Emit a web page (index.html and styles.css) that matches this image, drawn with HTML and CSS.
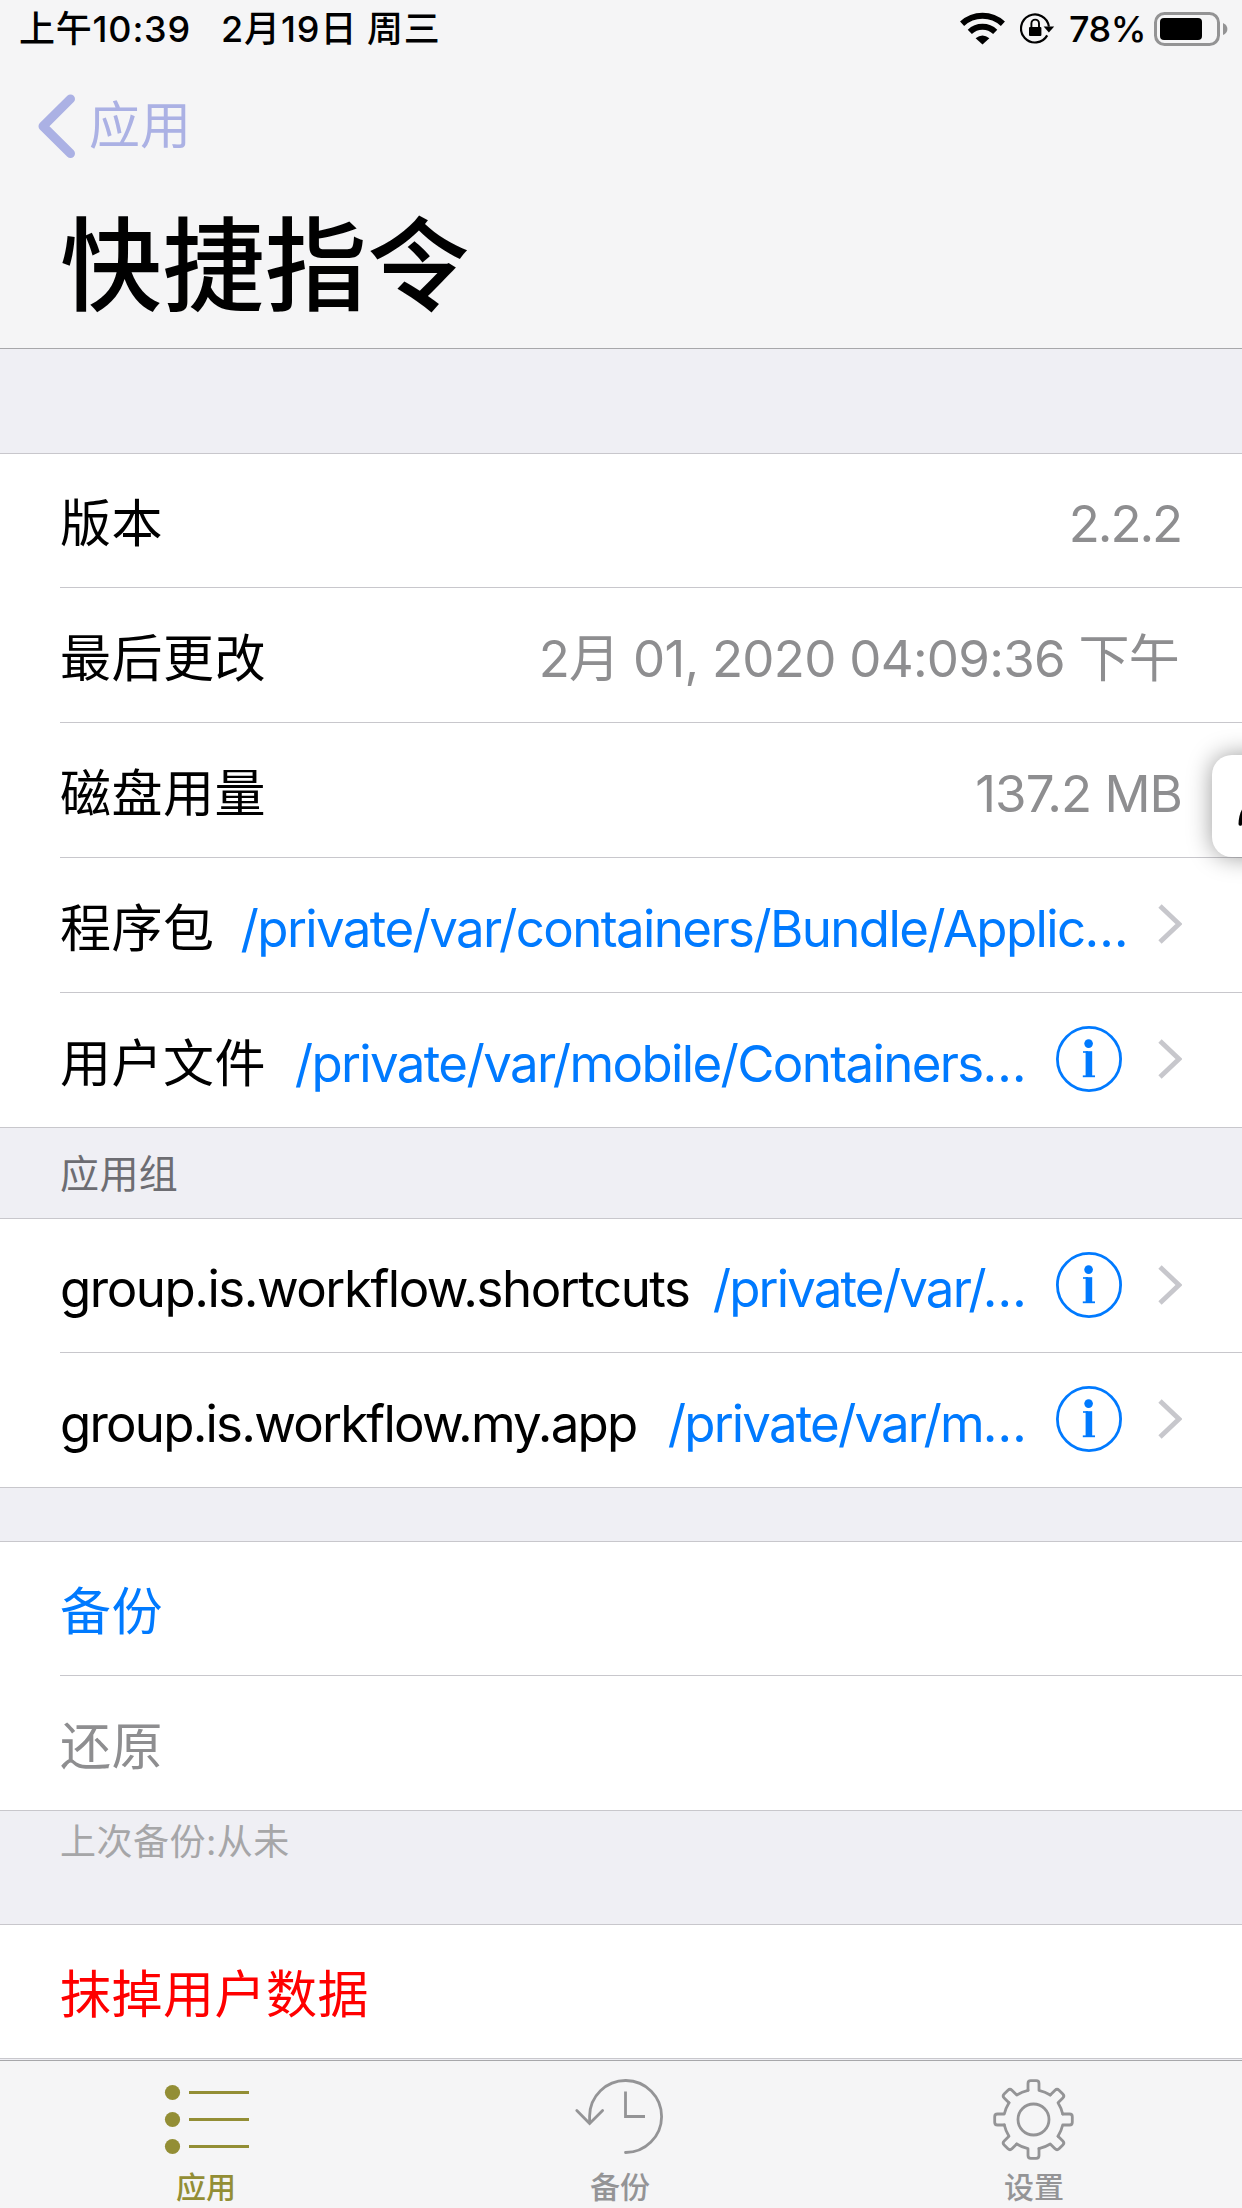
FILE: index.html
```html
<!DOCTYPE html>
<html lang="zh-CN">
<head>
<meta charset="utf-8">
<title>快捷指令</title>
<link rel="stylesheet" href="styles.css">
</head>
<body>
<svg class="defs" width="0" height="0" aria-hidden="true">
  <symbol id="icon-info" viewBox="0 0 66 66">
    <circle cx="33" cy="33" r="31.6" fill="none" stroke="currentColor" stroke-width="2.8"/>
    <circle cx="32.6" cy="17.6" r="4.3" fill="currentColor"/>
    <rect x="29.6" y="25.2" width="6.6" height="25.8" fill="currentColor"/>
    <rect x="27" y="25.2" width="5" height="1.6" fill="currentColor"/>
    <rect x="26.8" y="49.4" width="12.2" height="1.8" fill="currentColor"/>
  </symbol>
  <symbol id="icon-chevron" viewBox="0 0 24 42">
    <path d="M2 3L21 21L2 39" fill="none" stroke="currentColor" stroke-width="4.8"/>
  </symbol>
</svg>

<div class="screen">
  <header class="header">
    <div class="status">
      <span class="status-time">上午10:39</span>
      <span class="status-date">2月19日</span>
      <span class="status-day">周三</span>
      <div class="status-right">
        <svg class="wifi" width="46" height="34" viewBox="0 0 46 34">
          <g fill="none" stroke="#000" stroke-width="6">
            <path d="M2.1 11.8A30 30 0 0 1 42.9 11.8"/>
            <path d="M9.8 19.8A18.4 18.4 0 0 1 35.2 19.8"/>
          </g>
          <path d="M22.5 32.6L15.6 26.2Q22.5 20.6 29.4 26.2Z" fill="#000"/>
        </svg>
        <svg class="lock" width="36" height="32" viewBox="0 0 36 32">
          <path d="M27.2 22.4A14 14 0 1 1 28.9 13.6" fill="none" stroke="#000" stroke-width="2.2"/>
          <path d="M23.6 13.6H34.2L28.9 19.4Z" fill="#000"/>
          <rect x="9" y="14" width="12.4" height="9" rx="1" fill="#000"/>
          <path d="M11.4 14.5V10.6A3.8 4 0 0 1 19 10.6V14.5" fill="none" stroke="#000" stroke-width="1.9"/>
        </svg>
        <span class="percent">78%</span>
        <svg class="battery" width="74" height="34" viewBox="0 0 74 34">
          <rect x="1.5" y="1.5" width="63" height="31" rx="9" fill="none" stroke="#939394" stroke-width="3"/>
          <rect x="6" y="6" width="42" height="22" rx="4" fill="#000"/>
          <path d="M69 11Q73.4 13 73.4 17T69 23Z" fill="#939394"/>
        </svg>
      </div>
    </div>
    <div class="back">
      <svg width="42" height="64" viewBox="0 0 42 64"><path d="M34.5 4.9L7 32.3L34.5 59.5" fill="none" stroke="currentColor" stroke-width="9" stroke-linecap="round" stroke-linejoin="round"/></svg>
      <span>应用</span>
    </div>
    <h1 class="title">快捷指令</h1>
  </header>

  <main class="content">
    <section class="group">
      <div class="row"><span class="label">版本</span><span class="value tight">2.2.2</span></div>
      <div class="row"><span class="label">最后更改</span><span class="value date">2月 01, 2020 04:09:36 下午</span></div>
      <div class="row"><span class="label">磁盘用量</span><span class="value">137.2 MB</span></div>
      <div class="row"><span class="label">程序包</span><span class="path wide">/private/var/containers/Bundle/Applic…</span><svg class="chevron"><use href="#icon-chevron"/></svg></div>
      <div class="row"><span class="label">用户文件</span><span class="path">/private/var/mobile/Containers…</span><svg class="info"><use href="#icon-info"/></svg><svg class="chevron"><use href="#icon-chevron"/></svg></div>
    </section>
    <h2 class="section-title">应用组</h2>
    <section class="group">
      <div class="row"><span class="label latin">group.is.workflow.shortcuts</span><span class="path short">/private/var/…</span><svg class="info"><use href="#icon-info"/></svg><svg class="chevron"><use href="#icon-chevron"/></svg></div>
      <div class="row"><span class="label latin narrow">group.is.workflow.my.app</span><span class="path short">/private/var/m…</span><svg class="info"><use href="#icon-info"/></svg><svg class="chevron"><use href="#icon-chevron"/></svg></div>
    </section>
    <section class="group spaced">
      <div class="row"><span class="label action">备份</span></div>
      <div class="row"><span class="label disabled">还原</span></div>
    </section>
    <p class="section-note">上次备份:从未</p>
    <section class="group">
      <div class="row"><span class="label danger">抹掉用户数据</span></div>
    </section>
  </main>

  <nav class="tabs">
    <div class="tab active">
      <svg class="tab-icon" viewBox="0 0 120 105">
        <g fill="currentColor">
          <circle cx="25.5" cy="31.5" r="7.6"/><rect x="42" y="30" width="60" height="3"/>
          <circle cx="25.5" cy="58.5" r="7.6"/><rect x="42" y="57" width="60" height="3"/>
          <circle cx="25.5" cy="85.5" r="7.6"/><rect x="42" y="84" width="60" height="3"/>
        </g>
      </svg>
      <span>应用</span>
    </div>
    <div class="tab">
      <svg class="tab-icon" viewBox="0 0 120 105" fill="none" stroke="currentColor" stroke-width="2.8">
        <path d="M28.6 61.5V55A36 36 0 1 1 64.5 91.5" stroke-linecap="round"/>
        <path d="M15.8 49.5L28.6 62.4L41.6 49.5" stroke-linecap="round"/>
        <path d="M64.5 30.5V55.5H84"/>
      </svg>
      <span>备份</span>
    </div>
    <div class="tab">
      <svg class="tab-icon" viewBox="0 0 120 105" fill="none" stroke="currentColor" stroke-width="2.8" stroke-linecap="round" stroke-linejoin="round">
        <circle cx="58.5" cy="58.5" r="15.5"/>
        <g transform="translate(58.5 58.5)">
          <g id="tooth-pair">
            <path id="tooth" d="M-5.5-29.2V-36Q-5.5-38.8-2.7-38.8H2.7Q5.5-38.8 5.5-36V-29.2Q11.5-27.8 16.8-24.5"/>
            <use href="#tooth" transform="rotate(45)"/>
          </g>
          <use href="#tooth-pair" transform="rotate(90)"/>
          <use href="#tooth-pair" transform="rotate(180)"/>
          <use href="#tooth-pair" transform="rotate(270)"/>
        </g>
      </svg>
      <span>设置</span>
    </div>
  </nav>

  <div class="floating">
    <svg width="31" height="102" viewBox="0 0 31 102"><path d="M26.5 69C26.5 64 28 57 31 53V66L29.6 70.4Q26.5 71.5 26.5 69Z" fill="#000"/></svg>
  </div>
</div>
</body>
</html>
```
FILE: styles.css
```css
* { box-sizing: border-box; }

body {
  margin: 0;
  background: #efeff4;
  color: #000;
  font-family: Inter, "Noto Sans CJK SC", sans-serif;
  font-size: 51px;
}

.defs { position: absolute; }

svg { display: block; flex: none; }

.screen {
  position: relative;
  display: flex;
  flex-direction: column;
  width: 1242px;
  height: 2208px;
  overflow: hidden;
}

/* Header */
.header {
  height: 349px;
  background: #f5f5f6;
  border-bottom: 1px solid #a7a7aa;
}

.status {
  display: flex;
  align-items: center;
  height: 58px;
  padding-left: 19px;
  padding-right: 14px;
  font-size: 36px;
  font-weight: 450;
  line-height: 58px;
  white-space: nowrap;
}

.status-time { width: 202px; letter-spacing: 0.8px; }
.status-date { width: 146px; letter-spacing: 0.9px; }
.status-day { letter-spacing: 0.8px; }

.status-right {
  display: flex;
  align-items: center;
  margin-left: auto;
}

.lock { margin-left: 14px; }
.percent { margin-left: 13px; width: 85px; letter-spacing: -0.5px; }

.back {
  display: flex;
  align-items: center;
  height: 136px;
  padding-left: 36px;
  color: #abb1e4;
}

.back span { margin-left: 11px; line-height: 138px; }

.title {
  margin: 0;
  padding-left: 60px;
  font-size: 102px;
  font-weight: 500;
  line-height: 144px;
  letter-spacing: 0.4px;
}

/* Grouped list */
.content {
  display: flex;
  flex-direction: column;
  height: 1711px;
  padding-top: 104px;
}

.group {
  flex: none;
  background: #fff;
  border-top: 1px solid #c8c7cc;
  border-bottom: 1px solid #c8c7cc;
}

.spaced { margin-top: 53px; }

.row {
  display: flex;
  align-items: center;
  height: 133px;
  margin-left: 60px;
  padding-right: 60px;
  line-height: 126px;
  white-space: nowrap;
}

.row:not(:first-child) { height: 135px; border-top: 1px solid #c8c7cc; }

.label, .value, .path { padding-top: 7px; }
.label { letter-spacing: 0.5px; }
.latin { letter-spacing: -1.48px; }
.narrow { letter-spacing: -1.79px; }

.value {
  margin-left: auto;
  color: #8e8e90;
  letter-spacing: -0.95px;
}

.tight { padding-right: 1px; letter-spacing: -2.1px; }
.date { padding-right: 3px; letter-spacing: -0.73px; }

.path {
  margin-left: auto;
  margin-right: 31px;
  color: #007aff;
  letter-spacing: -1.65px;
}

.wide { letter-spacing: -1.62px; }
.short { letter-spacing: -1.85px; }

.info { width: 66px; height: 66px; margin-right: 36px; margin-bottom: 2px; color: #007aff; }
.chevron { width: 24px; height: 42px; margin-bottom: 2px; color: #c7c7cc; }

.action { color: #007aff; }
.disabled { color: #8e8e90; }
.danger { color: #f00; }

.section-title {
  flex: none;
  height: 90px;
  margin: 0;
  padding-left: 60px;
  color: #6d6d72;
  font-size: 39px;
  font-weight: 400;
  line-height: 92px;
  letter-spacing: 0.4px;
}

.section-note {
  flex: none;
  height: 113px;
  margin: 0;
  padding-left: 60px;
  color: #a6a6a8;
  font-size: 36px;
  line-height: 62px;
  letter-spacing: 0.5px;
}

/* Tab bar */
.tabs {
  display: grid;
  grid-template-columns: repeat(3, 1fr);
  height: 148px;
  background: #f5f5f6;
  border-top: 1px solid #a7a7aa;
}

.tab {
  display: flex;
  flex-direction: column;
  align-items: center;
  color: #949496;
  font-size: 30px;
  font-weight: 500;
  line-height: 43px;
}

.tab span { padding-right: 2px; }

.tab-icon { width: 120px; height: 105px; }
.active { color: #938e35; }

/* Button docked at the screen edge, over the list */
.floating {
  position: absolute;
  top: 755px;
  left: 1212px;
  width: 102px;
  height: 102px;
  border-radius: 20px;
  background: #fff;
  box-shadow: 0 0 24px rgba(0, 0, 0, 0.4);
}
```
